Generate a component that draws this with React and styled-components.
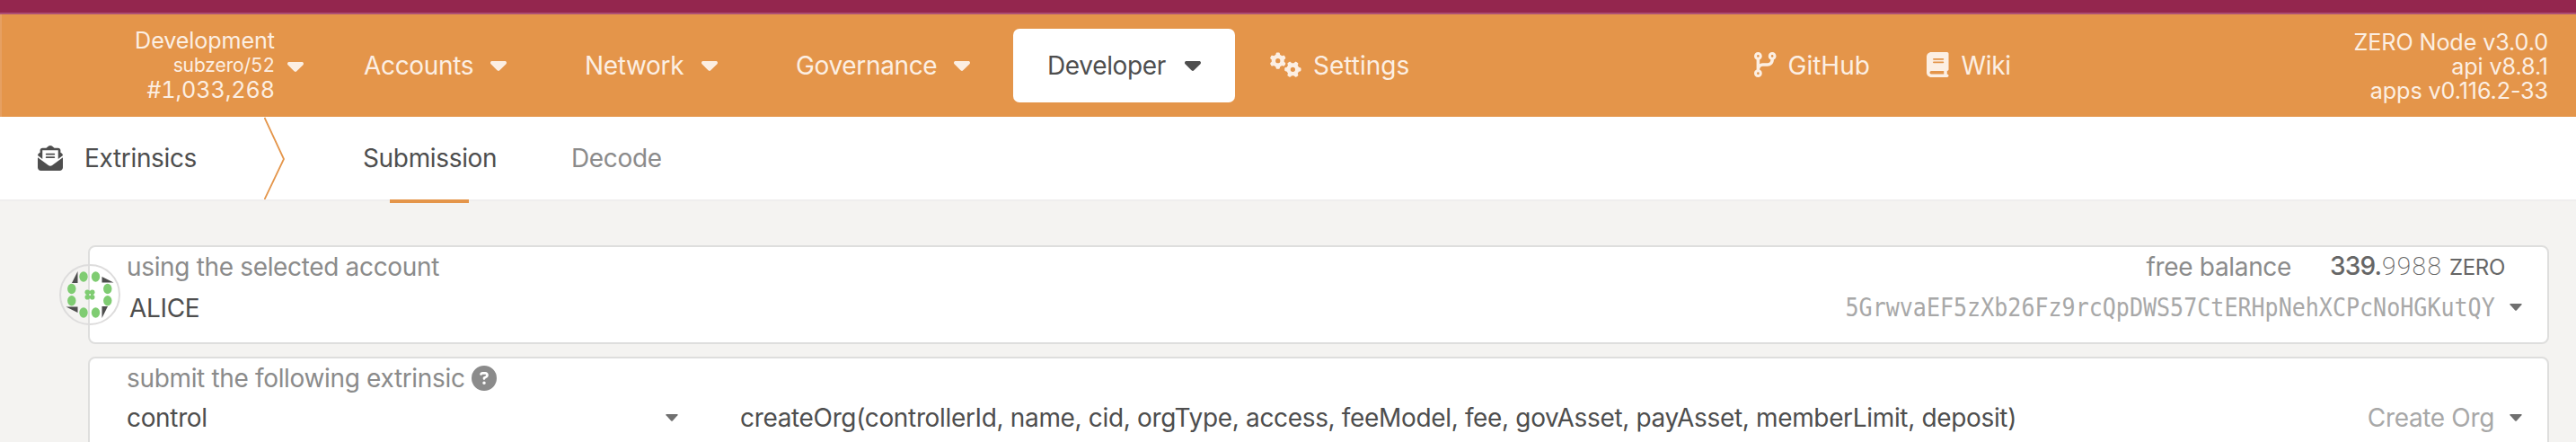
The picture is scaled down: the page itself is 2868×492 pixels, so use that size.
import React from "react";
import styled, { createGlobalStyle } from "styled-components";
import { FaGears, FaCodeBranch, FaBook, FaEnvelopeOpenText, FaCircleQuestion } from "react-icons/fa6";

const GlobalStyle = createGlobalStyle`
  * { box-sizing: border-box; }
  body {
    margin: 0;
    height: 492px;
    overflow: hidden;
    background: #f4f3f1;
    color: #4e4e4e;
    font-family: Inter, "Liberation Sans", sans-serif;
    font-size: 28px;
    line-height: 34px;
    letter-spacing: -0.34px;
  }
`;

const Page = styled.div`
  height: 492px;
  overflow: hidden;
`;

const Accent = styled.div`
  height: 16px;
  background: #94264e;
  border-bottom: 2px solid #ad4f74;
`;

const Text = styled.span`
  display: block;
  flex: none;
  white-space: nowrap;
  width: ${(p) => (p.$w ? `${p.$w}px` : "auto")};
`;

const MenuBar = styled.header`
  display: flex;
  align-items: center;
  height: 114px;
  padding-right: 31px;
  background: #e4954a;
  border-left: 2px solid #e6a062;
  color: #fcefe3;
`;

const ChainInfo = styled.div`
  display: flex;
  align-items: center;
  width: 336px;
  margin-right: 67px;
  justify-content: flex-end;
  gap: 14px;
  > svg { margin-top: 3px; }
`;

const InfoLines = styled.div`
  display: flex;
  flex-direction: column;
  align-items: flex-end;
  text-align: right;
  font-size: 25.2px;
  line-height: 27px;
  letter-spacing: -0.12px;
`;

const ChainLines = styled(InfoLines)`
  padding-bottom: 1px;
  font-variant-numeric: tabular-nums;
`;

const SmallLine = styled(Text)`
  font-size: 21px;
  line-height: 28px;
`;

const Nav = styled.nav`
  display: flex;
  align-items: center;
`;

const NavItem = styled.a`
  display: flex;
  align-items: center;
  height: 82px;
  width: ${(p) => p.$w}px;
  padding-left: ${(p) => p.$pad || 0}px;
  gap: ${(p) => p.$gap || 21}px;
  border-radius: 7px;
  color: ${(p) => (p.$active ? "#4e4e4e" : "inherit")};
  background: ${(p) => (p.$active ? "#fff" : "transparent")};
  svg { flex: none; }
`;

const NavIcon = styled.span`
  display: flex;
  margin-bottom: 2px;
  svg {
    width: ${(p) => p.$w}px;
    height: 28px;
  }
`;

const LinkText = styled(Text)`
  letter-spacing: 0;
`;

const Versions = styled(InfoLines)`
  margin-left: auto;
  padding-top: 2px;
`;

const Tabs = styled.div`
  display: flex;
  height: 92px;
  background: #fff;
`;

const TabTitle = styled.div`
  display: flex;
  align-items: center;
  width: 294px;
  padding-left: 42px;
  gap: 24px;
`;

const Chevron = styled.svg`
  width: 23px;
  height: 92px;
  fill: none;
  stroke: #e4954a;
  stroke-width: 1.8;
`;

const Tab = styled.a`
  position: relative;
  display: flex;
  align-items: center;
  margin-left: ${(p) => p.$ml}px;
  color: ${(p) => (p.$active ? "#4e4e4e" : "#8b8b8b")};
  &::after {
    content: "";
    display: ${(p) => (p.$active ? "block" : "none")};
    position: absolute;
    left: 30px;
    bottom: -4px;
    width: 88px;
    height: 4px;
    background: #e4954a;
  }
`;

const Content = styled.main`
  display: flex;
  flex-direction: column;
  gap: 14px;
  padding: 49px 30px 0 98px;
  border-top: 2px solid #efeeee;
`;

const Card = styled.section`
  position: relative;
  height: 110px;
  padding: 3px 0 0 41px;
  background: #fff;
  border: 2px solid #dededd;
  border-radius: 8px;
`;

const Row = styled.div`
  display: flex;
  align-items: center;
  height: ${(p) => p.$h}px;
  padding-right: ${(p) => p.$pr || 0}px;
`;

const Label = styled(Text)`
  color: #8b8b8b;
`;

const AccountName = styled(Text)`
  margin-left: 3px;
`;

const Push = styled.div`
  display: flex;
  align-items: center;
  margin-left: auto;
  padding-bottom: ${(p) => p.$lift || 0}px;
`;

const Balance = styled.div`
  display: flex;
  align-items: baseline;
  margin-left: 43px;
  color: #666;
`;

const Whole = styled(Text)`
  font-weight: 500;
  letter-spacing: -0.8px;
`;

const Fraction = styled(Text)`
  font-family: Roboto, sans-serif;
  font-weight: 200;
  letter-spacing: 1.4px;
`;

const Unit = styled(Text)`
  font-size: 24px;
`;

const Address = styled(Text)`
  font-family: "DejaVu Sans Mono", monospace;
  font-size: 27.5px;
  letter-spacing: 0;
  color: #a8a8a8;
  transform: scaleX(0.91);
  transform-origin: right;
`;

const Muted = styled(Text)`
  color: #a8a8a8;
`;

const SelectCaret = styled.span`
  display: flex;
  margin-left: ${(p) => p.$ml || 0}px;
  margin-right: ${(p) => p.$mr || 0}px;
  color: #707070;
`;

const Identicon = styled.svg`
  position: absolute;
  left: -34px;
  top: 19px;
  width: 68px;
  height: 68px;
`;

const CARET =
  "M137.4 374.6c12.5 12.5 32.8 12.5 45.3 0l128-128c9.2-9.2 11.9-22.9 6.9-34.9s-16.6-19.8-29.6-19.8L32 192c-12.9 0-24.6 7.8-29.6 19.8s-2.2 25.7 6.9 34.9l128 128z";

function Caret() {
  return (
    <svg width="18" height="11" viewBox="0 192 320 192" fill="currentColor">
      <path d={CARET} />
    </svg>
  );
}

function SmallCaret({ ml, mr }) {
  return (
    <SelectCaret $ml={ml} $mr={mr}>
      <svg width="14" height="8" viewBox="0 0 14 8" fill="currentColor">
        <path d="M0.8 0H13.2Q14 0.4 13.4 1.2L7.8 7.5Q7 8.2 6.2 7.5L0.6 1.2Q0 0.4 0.8 0Z" />
      </svg>
    </SelectCaret>
  );
}

const DOTS = [[27, 14], [40.5, 14], [13.8, 27.5], [53.8, 27.5], [13.8, 40.8], [53.8, 40.8], [27, 54], [40.5, 54]];
const CORE = [[31.3, 31.3], [36.7, 31.3], [31.3, 36.7], [36.7, 36.7]];

function AccountIcon() {
  return (
    <Identicon viewBox="0 0 68 68">
      <circle cx="34" cy="34" r="33" fill="none" stroke="#dddcdc" strokeWidth="2" />
      <g fill="#4e4e4e">
        <path d="M20.5 8V21H14Z" />
        <path d="M47.5 14V20.5H60.5Z" />
        <path d="M47.5 60V47H54Z" />
        <path d="M20.5 54V47.5H7.5Z" />
      </g>
      <g fill="#7fcc72">
        {DOTS.map(([x, y]) => <ellipse key={`${x}-${y}`} cx={x} cy={y} rx="4.7" ry="5.7" />)}
        {CORE.map(([x, y]) => <circle key={`${x}-${y}`} cx={x} cy={y} r="2.8" />)}
        <path d="M31 31h6v6h-6z M33 33v2h2v-2z" fillRule="evenodd" />
      </g>
    </Identicon>
  );
}

export default function App() {
  return (
    <Page>
      <GlobalStyle />
      <Accent />
      <MenuBar>
        <ChainInfo>
          <ChainLines>
            <Text>Development</Text>
            <SmallLine>subzero/52</SmallLine>
            <Text>#1,033,268</Text>
          </ChainLines>
          <Caret />
        </ChainInfo>
        <Nav>
          <NavItem $w={246}><Text $w={120}>Accounts</Text><Caret /></NavItem>
          <NavItem $w={235}><Text $w={109}>Network</Text><Caret /></NavItem>
          <NavItem $w={242}><Text $w={155}>Governance</Text><Caret /></NavItem>
          <NavItem $w={247} $pad={38} $active><Text $w={132}>Developer</Text><Caret /></NavItem>
          <NavItem $w={578} $pad={39} $gap={13}>
            <NavIcon $w={35}><FaGears /></NavIcon>
            <LinkText>Settings</LinkText>
          </NavItem>
          <NavItem $w={192} $gap={13}>
            <NavIcon $w={24.5}><FaCodeBranch /></NavIcon>
            <LinkText>GitHub</LinkText>
          </NavItem>
          <NavItem $w={100} $gap={14}>
            <NavIcon $w={24.5}><FaBook /></NavIcon>
            <Text>Wiki</Text>
          </NavItem>
        </Nav>
        <Versions>
          <Text>ZERO Node v3.0.0</Text>
          <Text>api v8.8.1</Text>
          <Text>apps v0.116.2-33</Text>
        </Versions>
      </MenuBar>
      <Tabs>
        <TabTitle><FaEnvelopeOpenText size={28} /><Text>Extrinsics</Text></TabTitle>
        <Chevron viewBox="0 0 23 92"><path d="M0.5 1L22 47L0.5 92" /></Chevron>
        <Tab $active $ml={87}><Text $w={147}>Submission</Text></Tab>
        <Tab $ml={85}><Text>Decode</Text></Tab>
      </Tabs>
      <Content>
        <Card>
          <AccountIcon />
          <Row $h={38} $pr={48}>
            <Label>using the selected account</Label>
            <Push>
              <Label>free balance</Label>
              <Balance>
                <Whole $w={58}>339.</Whole>
                <Fraction $w={75}>9988</Fraction>
                <Unit $w={61}>ZERO</Unit>
              </Balance>
            </Push>
          </Row>
          <Row $h={54} $pr={28}>
            <AccountName>ALICE</AccountName>
            <Push $lift={3}>
              <Address>5GrwvaEF5zXb26Fz9rcQpDWS57CtERHpNehXCPcNoHGKutQY</Address>
              <SmallCaret ml={16} />
            </Push>
          </Row>
        </Card>
        <Card>
          <Row $h={38}>
            <Label $w={384}>submit the following extrinsic</Label>
            <FaCircleQuestion size={28} color="#8b8b8b" />
          </Row>
          <Row $h={50} $pr={28}>
            <Text $w={600}>control</Text>
            <SmallCaret mr={69} />
            <Text>createOrg(controllerId, name, cid, orgType, access, feeModel, fee, govAsset, payAsset, memberLimit, deposit)</Text>
            <Push>
              <Muted>Create Org</Muted>
              <SmallCaret ml={17} />
            </Push>
          </Row>
        </Card>
      </Content>
    </Page>
  );
}
